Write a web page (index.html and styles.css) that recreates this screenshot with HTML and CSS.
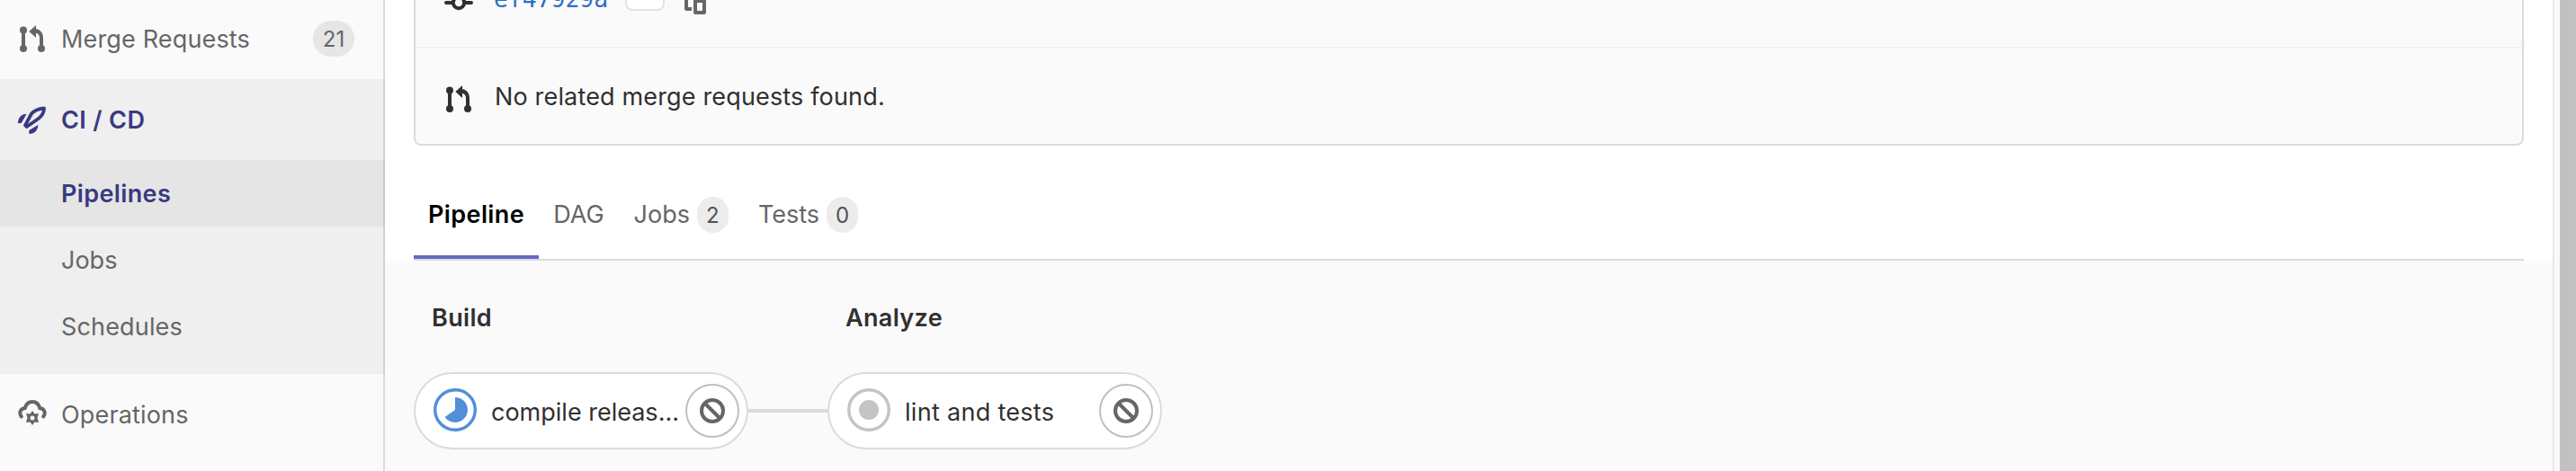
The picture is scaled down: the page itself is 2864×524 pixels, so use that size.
FILE: index.html
```html
<!DOCTYPE html>
<html lang="en">
<head>
<meta charset="utf-8">
<title>Pipeline</title>
<link rel="stylesheet" href="styles.css">
</head>
<body>
<svg class="defs" aria-hidden="true">
  <symbol id="merge" viewBox="0 0 28 30">
    <circle cx="4" cy="5.500" r="4"/><circle cx="4" cy="26" r="4"/><circle cx="24" cy="26" r="4"/>
    <path d="M2 5.500h4V26H2zM10.300 7 18 0v4c5 .8 8 5 8 10v12h-4V14c0-2.800-1.500-4.700-4-5.300V14z"/>
  </symbol>
  <symbol id="cancel" viewBox="0 0 28 28">
    <circle cx="14" cy="14" r="12" fill="none" stroke="currentColor" stroke-width="4"/>
    <path d="M5.500 5.500l17 17" stroke="currentColor" stroke-width="4"/>
  </symbol>
</svg>
<div class="page">
  <nav class="sidebar">
    <a class="item first"><svg class="icon merge-icon"><use href="#merge"/></svg><span class="label">Merge Requests</span><span class="count">21</span></a>
    <div class="group">
      <a class="item head">
        <svg class="icon" viewBox="0 0 32 32"><path d="M29 3.300C22 4 18 6 15 9.500L8 22.300 9.700 24 22 15.500c5-3.500 7-6.500 7-12.200z" fill="none" stroke="currentColor" stroke-width="3.800" stroke-linejoin="round"/><path d="M0 20.300C0 14 3.500 9.700 9.500 9.700L4 19.700zM12.300 28l10-6c0 6-4 10-10 10z"/></svg>
        <span class="label">CI / CD</span></a>
      <a class="sub active"><span class="label">Pipelines</span></a>
      <a class="sub"><span class="label tight">Jobs</span></a>
      <a class="sub"><span class="label">Schedules</span></a>
    </div>
    <a class="item">
      <svg class="icon" viewBox="0 0 32 32"><path d="M3.800 18.500C.5 14 3 9.500 7.800 9 9 4.500 12 2 16 2s7 2.500 8.200 7c4.800.5 7.300 5 4 9.500" fill="none" stroke="currentColor" stroke-width="4" stroke-linecap="round"/><path fill-rule="evenodd" d="M16 12l2.500 3.500L23 15l-1.500 5 1.500 5-4.500-.5L16 28l-2.500-3.500L9 25l1.500-5L9 15l4.500.5zM16 17.500a2.500 2.500 0 1 0 0 5 2.500 2.500 0 0 0 0-5z"/></svg>
      <span class="label">Operations</span></a>
  </nav>
  <main class="main">
    <section class="card">
      <div class="commit">
        <svg class="commit-icon" viewBox="0 0 32 32"><path d="M2 16h7M23 16h7" stroke="currentColor" stroke-width="4" stroke-linecap="round"/><circle cx="16" cy="16" r="6.200" fill="none" stroke="currentColor" stroke-width="4"/></svg>
        <a class="sha">ef47929a</a>
        <span class="more"></span>
        <svg class="copy" viewBox="0 0 24 28"><path d="M2 0v22h6M12 13h10v13H12z" fill="none" stroke="currentColor" stroke-width="4" stroke-linejoin="round"/></svg>
      </div>
      <div class="related"><svg class="merge-icon"><use href="#merge"/></svg><span class="label">No related merge requests found.</span></div>
    </section>
    <div class="tabs">
      <a class="tab current"><span>Pipeline</span></a>
      <a class="tab"><span>DAG</span></a>
      <a class="tab"><span>Jobs</span><span class="badge">2</span></a>
      <a class="tab"><span>Tests</span><span class="badge">0</span></a>
    </div>
    <section class="graph">
      <div class="stage">
        <h3>Build</h3>
        <div class="job">
          <svg class="status running" viewBox="0 0 48 48"><circle cx="24" cy="24" r="22.300" fill="none" stroke="currentColor" stroke-width="3.400"/><path d="M24 10a14 14 0 1 1-11.500 22L24 24z"/></svg>
          <span class="name">compile releas...</span>
          <button class="stop"><svg viewBox="0 0 28 28"><use href="#cancel"/></svg></button>
        </div>
      </div>
      <div class="link"></div>
      <div class="stage">
        <h3>Analyze</h3>
        <div class="job">
          <svg class="status" viewBox="0 0 48 48"><circle cx="24" cy="24" r="22.300" fill="none" stroke="currentColor" stroke-width="3.400"/><circle cx="24" cy="24" r="11"/></svg>
          <span class="name wide">lint and tests</span>
          <button class="stop"><svg viewBox="0 0 28 28"><use href="#cancel"/></svg></button>
        </div>
      </div>
    </section>
  </main>
  <div class="gutter"></div>
  <div class="scrollbar"></div>
</div>
</body>
</html>
```
FILE: styles.css
```css
* { box-sizing: border-box; }
body { margin: 0; overflow: hidden; font: 27px/36px Inter, "Liberation Sans", sans-serif; color: #303030; }
.defs { position: absolute; width: 0; height: 0; }
svg { fill: currentColor; flex: none; display: block; }
span, a, h3 { white-space: nowrap; }
.page { display: flex; height: 524px; overflow: hidden; background: #fff; }
.label { padding-top: 2px; letter-spacing: .16px; }
.label.tight { letter-spacing: 0; }

.sidebar { width: 428px; flex: none; background: #fafafa; box-shadow: inset -2px 0 0 #dbdbdb; color: #666; }
.item { display: flex; align-items: center; height: 90px; padding: 0 34px 0 20px; }
.item.first { height: 88px; padding-bottom: 2px; }
.icon { width: 32px; height: 32px; margin-right: 16px; }
.merge-icon { width: 28px; height: 30px; }
.item .merge-icon { margin: 0 18px 0 2px; }
.count { margin-left: auto; width: 46px; height: 40px; border-radius: 20px; background: #e6e6e6; font-size: 24px; line-height: 41px; text-align: center; }
.group { height: 328px; background: rgba(0, 0, 0, .045); }
.head { color: #393982; font-weight: 600; }
.head .label, .active .label { letter-spacing: .38px; }
.sub { display: flex; align-items: center; height: 74px; padding-left: 68px; }
.sub.active { background: rgba(0, 0, 0, .04); color: #393982; font-weight: 600; }

.main { flex: 1; min-width: 0; display: flex; flex-direction: column; }
.card { height: 162px; margin: 0 32px; border: 2px solid #dbdbdb; border-top: 0; border-radius: 0 0 8px 8px; background: #fafafa; }
.commit { display: flex; align-items: flex-start; height: 54px; padding-left: 32px; border-bottom: 2px solid #f0f0f0; }
.commit-icon { width: 32px; height: 32px; margin-top: -13px; }
.sha { margin: -19px 0 0 23px; font: 26.4px/36px "DejaVu Sans Mono", monospace; color: #2f6fc4; }
.more { width: 44px; height: 32px; margin: -20px 0 0 19px; border: 2px solid #e3e3e3; border-radius: 8px; background: #fff; }
.copy { width: 24px; height: 28px; margin: -12px 0 0 22px; color: #666; }
.related { display: flex; align-items: center; height: 106px; padding-left: 34px; }
.related .merge-icon { margin: 6px 26px 0 0; }
.tabs { display: flex; height: 128px; margin: 0 32px; border-bottom: 2px solid #dbdbdb; color: #666; }
.tab { display: flex; align-items: center; height: 126px; padding: 27px 16px 0; }
.tab + .tab { padding-right: 17px; }
.current { color: #000; font-weight: 600; letter-spacing: .4px; border-bottom: 4px solid #6666c4; padding-top: 31px; }
.badge { width: 35px; height: 40px; margin: 1px 0 0 8px; border-radius: 18px; background: #ececec; color: #525252; font-size: 24px; line-height: 41px; text-align: center; }

.graph { display: flex; flex: 1; padding: 46px 32px 0; background: #fafafa; }
.stage { width: 372px; }
h3 { margin: 0 0 42px 20px; font-size: 27px; line-height: 36px; font-weight: 600; letter-spacing: .35px; }
.job { display: flex; align-items: center; height: 86px; padding: 0 8px 0 20px; border: 2px solid #dbdbdb; border-radius: 43px; background: #fff; }
.status { width: 48px; height: 48px; margin: -2px 16px 0 0; color: #c4c4c4; }
.status.running { color: #528fd9; }
.name { padding-top: 4px; }
.name.wide { letter-spacing: .3px; }
.stop { display: grid; place-items: center; flex: none; width: 60px; height: 60px; margin-left: auto; padding: 0; border: 2px solid #bfbfbf; border-radius: 50%; background: #fff; color: #666; }
.stop svg { width: 28px; height: 28px; }
.link { width: 88px; height: 4px; margin-top: 119px; background: #dbdbdb; }
.gutter { width: 8px; background: #fafafa; border-left: 2px solid #e8e8e8; }
.scrollbar { width: 18px; background: #c1c1c1; }
```
